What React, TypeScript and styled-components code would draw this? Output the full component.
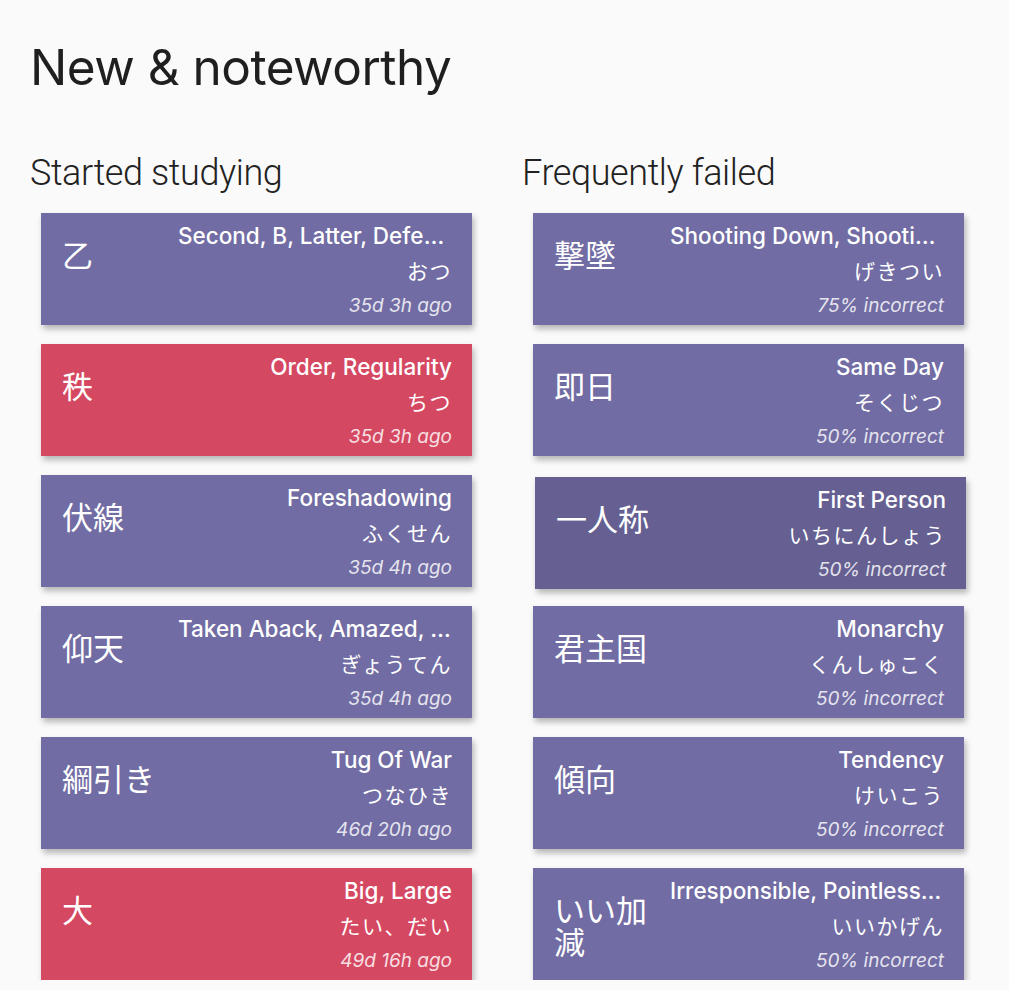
import React from 'react'
import styled, { createGlobalStyle, css } from 'styled-components'

type Item = {
    kanji: string
    meaning: string
    reading: string
    note: string
    tone?: 'purple' | 'red'
    hover?: boolean
}

const started: Item[] = [
    { kanji: '乙', meaning: 'Second, B, Latter, Defeat, Queer', reading: 'おつ', note: '35d 3h ago' },
    { kanji: '秩', meaning: 'Order, Regularity', reading: 'ちつ', note: '35d 3h ago', tone: 'red' },
    { kanji: '伏線', meaning: 'Foreshadowing', reading: 'ふくせん', note: '35d 4h ago' },
    { kanji: '仰天', meaning: 'Taken Aback, Amazed, Astonished', reading: 'ぎょうてん', note: '35d 4h ago' },
    { kanji: '綱引き', meaning: 'Tug Of War', reading: 'つなひき', note: '46d 20h ago' },
    { kanji: '大', meaning: 'Big, Large', reading: 'たい、だい', note: '49d 16h ago', tone: 'red' },
]

const failed: Item[] = [
    { kanji: '撃墜', meaning: 'Shooting Down, Shooting Down A Plane', reading: 'げきつい', note: '75% incorrect' },
    { kanji: '即日', meaning: 'Same Day', reading: 'そくじつ', note: '50% incorrect' },
    { kanji: '一人称', meaning: 'First Person', reading: 'いちにんしょう', note: '50% incorrect', hover: true },
    { kanji: '君主国', meaning: 'Monarchy', reading: 'くんしゅこく', note: '50% incorrect' },
    { kanji: '傾向', meaning: 'Tendency', reading: 'けいこう', note: '50% incorrect' },
    { kanji: 'いい加減', meaning: 'Irresponsible, Pointless, Half-Hearted', reading: 'いいかげん', note: '50% incorrect' },
]

const GlobalStyle = createGlobalStyle`
    body {
        margin: 0;
        background: #fafafa;
        font-family: Inter, "Noto Sans CJK JP", sans-serif;
        color: #1f1f1f;
    }
`

const Page = styled.main`
    padding: 0 30px;
`

const Title = styled.h1`
    margin: 0;
    padding-top: 35px;
    font-size: 49.5px;
    font-weight: 400;
    line-height: 64px;
    letter-spacing: -0.5px;
`

const Columns = styled.div`
    display: grid;
    grid-template-columns: 492px 492px;
    margin-top: 52px;
`

const SectionTitle = styled.h2`
    margin: 0 0 18px;
    font-family: Roboto, "Noto Sans", sans-serif;
    font-size: 36px;
    font-weight: 300;
    line-height: 44px;
    letter-spacing: -0.4px;
    color: #222;
`

const List = styled.div`
    display: flex;
    flex-direction: column;
    gap: 19px;
`

const tones = {
    purple: '#716ca3',
    red: '#d54862',
}

const Card = styled.div<{ $tone: 'purple' | 'red'; $hover?: boolean }>`
    display: flex;
    box-sizing: border-box;
    width: 431px;
    height: 112px;
    margin-left: 11px;
    padding: 5px 20px 0 21px;
    background: ${p => tones[p.$tone]};
    color: #fff;
    box-shadow: 2px 4px 6px rgba(0, 0, 0, 0.28);
    ${p => p.$hover && css`
        background: #655f92;
        transform: translate(2px, 2px);
    `}
`

const Kanji = styled.div`
    flex: 1;
    min-width: 0;
    padding-top: 20px;
    font-size: 31px;
    line-height: 32px;
    font-family: "Noto Sans CJK JP", sans-serif;
`

const Info = styled.div`
    width: 274px;
    text-align: right;
`

const Meaning = styled.div`
    font-size: 22.5px;
    font-weight: 500;
    line-height: 36px;
    white-space: nowrap;
    overflow: hidden;
    text-overflow: ellipsis;
`

const Reading = styled.div`
    font-size: 21px;
    line-height: 32px;
    font-family: "Noto Sans CJK JP", sans-serif;
    letter-spacing: 1.5px;
`

const Note = styled.div`
    font-size: 19px;
    font-style: italic;
    line-height: 40px;
    opacity: 0.82;
`

function ItemCard({ item }: { item: Item }) {
    return (
        <Card $tone={item.tone ?? 'purple'} $hover={item.hover}>
            <Kanji>{item.kanji}</Kanji>
            <Info>
                <Meaning>{item.meaning}</Meaning>
                <Reading>{item.reading}</Reading>
                <Note>{item.note}</Note>
            </Info>
        </Card>
    )
}

export default function App() {
    return (
        <Page>
            <GlobalStyle />
            <Title>New &amp; noteworthy</Title>
            <Columns>
                <section>
                    <SectionTitle>Started studying</SectionTitle>
                    <List>
                        {started.map(i => <ItemCard key={i.kanji} item={i} />)}
                    </List>
                </section>
                <section>
                    <SectionTitle>Frequently failed</SectionTitle>
                    <List>
                        {failed.map(i => <ItemCard key={i.kanji} item={i} />)}
                    </List>
                </section>
            </Columns>
        </Page>
    )
}
